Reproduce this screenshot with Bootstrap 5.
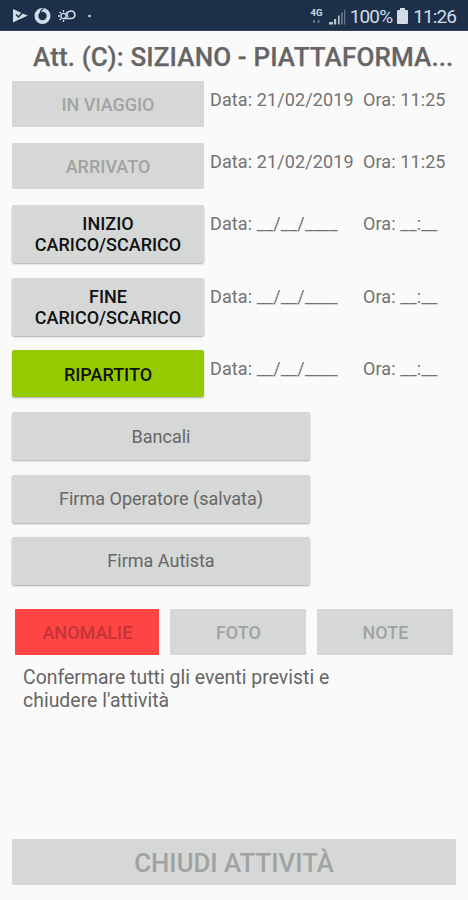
<!DOCTYPE html>
<html lang="it">
<head>
<meta charset="utf-8">
<meta name="viewport" content="width=device-width, initial-scale=1">
<title>Attività</title>
<link href="https://cdn.jsdelivr.net/npm/bootstrap@5.3.0/dist/css/bootstrap.min.css" rel="stylesheet">
<style>
body{font-family:Roboto,"Liberation Sans",sans-serif;background:#fafafa;color:#727272;font-size:18px;line-height:21px}
.screen{height:900px;overflow:hidden}
.statusbar{height:31px;background:#1c3149;color:#d3dbe6;font-size:19px;padding:2px 12px 0 12px;border-bottom:1px solid #31445a}
.clock{letter-spacing:-.9px}
.app-title{font-size:26px;line-height:30px;font-weight:500;color:#656565;margin:11px 0 0 33px;white-space:nowrap;letter-spacing:.13px;-webkit-text-stroke:.25px #656565}
.events{margin:9px 0 0 12px}
.event{height:62.200px}
.event-tall{height:72.400px}
.ev-btn{width:192px;height:46px;font-size:18px;line-height:21px;font-weight:500;border:0;border-radius:1px;background:#d6d8d7;color:#111;padding:1px 0 0;flex:none}
.raised{border-radius:2.5px;box-shadow:0 1px 2px rgba(0,0,0,.32)}
.tall{height:58px;padding:0}
.mid{height:47px}
.ev-btn:disabled{background:#d6d8d7;color:#a1a3a2;opacity:1;border:0}
.go{background:#96ca00}
.ev-btn.alarm{width:144px;margin-right:11px}
.ev-btn.alarm:disabled{background:#ff4444;color:#c23536}
.ev-btn.extra{width:136px}
.date{width:159px;padding:8px 0 0 6px;white-space:nowrap;letter-spacing:.12px}
.hour{padding-top:8px;white-space:nowrap;letter-spacing:.1px}
.wide{width:298px;height:48px;font-weight:400;color:#666;padding:0}
.extras{margin:10.300px 0 0 15.400px}
.ev-btn.note{margin-left:11px}
.notice{margin:12px 0 0 23px;width:330px;line-height:22.500px;font-size:19.400px;letter-spacing:.03px;color:#666}
.ev-btn.close-btn{width:444px;height:46px;font-size:25.800px;padding-top:3px;margin:0 0 15px 12px}
</style>
<script src="https://cdn.jsdelivr.net/npm/bootstrap@5.3.0/dist/js/bootstrap.bundle.min.js"></script>
</head>
<body>
<div class="screen d-flex flex-column">
  <header class="statusbar d-flex align-items-center justify-content-between flex-shrink-0">
    <svg width="84" height="22" viewBox="12 5 84 22" fill="none">
      <path d="M13 9 L27 15.500 L13 22.500 Z" fill="#d3dbe6"/>
      <path d="M16 14.500 L18.500 17 L23.500 11.500" stroke="#1c3149" stroke-width="1.500"/>
      <path d="M20 19L28 15.500L23.500 14.500" fill="#d3dbe6"/>
      <circle cx="42.500" cy="16" r="6.100" stroke="#d3dbe6" stroke-width="3.800"/>
      <path d="M43.500 8.500 C41 10 40 12 40.500 14" stroke="#1c3149" stroke-width="1.200"/>
      <g stroke="#d3dbe6" stroke-width="1.300">
        <circle cx="63.500" cy="16" r="2.600"/>
        <path d="M63.500 10V12M58 16H60M59.500 12L61 13.300M59.500 20L61 18.700M63.500 20V22M67 12L66 13.500"/>
        <path d="M64 18.500H71.500C76 18.500 76 11 71 11C67 11 66 15 68 17" stroke-width="1.600"/>
      </g>
      <circle cx="89.500" cy="16" r="1.300" fill="#d3dbe6"/>
    </svg>
    <div class="d-flex align-items-center">
      <svg class="me-1" width="36" height="22" viewBox="309 5 36 22">
        <text x="309.500" y="16" font-size="9.500" font-weight="700" fill="#d3dbe6">4G</text>
        <path d="M312 20h2v3h-2zM316.500 20h2v3h-2z" fill="#61738a"/>
        <path d="M328 22h4v2.500h-4zM333 19h2.200v5.500H333zM337 15.500h1.600v9H337z" fill="#b9c4d1"/>
        <path d="M340 12.500h1.800v12H340zM343 9.500h1.300v15H343z" fill="#61738a"/>
      </svg>
      <span class="clock">100%</span>
      <svg class="ms-1 me-1" width="13" height="18" viewBox="0 0 13 18"><path d="M4 1h5v2h2q1 0 1 1v12q0 1-1 1H2q-1 0-1-1V4q0-1 1-1h2z" fill="#d3dbe6"/></svg>
      <span class="clock">11:26</span>
    </div>
  </header>

  <h1 class="app-title mb-0">Att. (C): SIZIANO - PIATTAFORMA...</h1>

  <main class="events d-flex flex-column">
    <div class="event d-flex"><button class="btn ev-btn" disabled>IN VIAGGIO</button><div class="date">Data: 21/02/2019</div><div class="hour">Ora: 11:25</div></div>
    <div class="event d-flex"><button class="btn ev-btn" disabled>ARRIVATO</button><div class="date">Data: 21/02/2019</div><div class="hour">Ora: 11:25</div></div>
    <div class="event event-tall d-flex"><button class="btn ev-btn raised tall">INIZIO<br>CARICO/SCARICO</button><div class="date">Data: __/__/____</div><div class="hour">Ora: __:__</div></div>
    <div class="event event-tall d-flex"><button class="btn ev-btn raised tall">FINE<br>CARICO/SCARICO</button><div class="date">Data: __/__/____</div><div class="hour">Ora: __:__</div></div>
    <div class="event d-flex"><button class="btn ev-btn raised mid go">RIPARTITO</button><div class="date">Data: __/__/____</div><div class="hour">Ora: __:__</div></div>
    <div class="event"><button class="btn ev-btn raised wide">Bancali</button></div>
    <div class="event"><button class="btn ev-btn raised wide">Firma Operatore (salvata)</button></div>
    <div class="event"><button class="btn ev-btn raised wide">Firma Autista</button></div>
  </main>

  <div class="extras d-flex">
    <button class="btn ev-btn alarm" disabled>ANOMALIE</button>
    <button class="btn ev-btn extra" disabled>FOTO</button>
    <button class="btn ev-btn extra note" disabled>NOTE</button>
  </div>
  <p class="notice mb-0">Confermare tutti gli eventi previsti e<br>chiudere l'attività</p>
  <button class="btn ev-btn close-btn mt-auto" disabled>CHIUDI ATTIVITÀ</button>
</div>
</body>
</html>
